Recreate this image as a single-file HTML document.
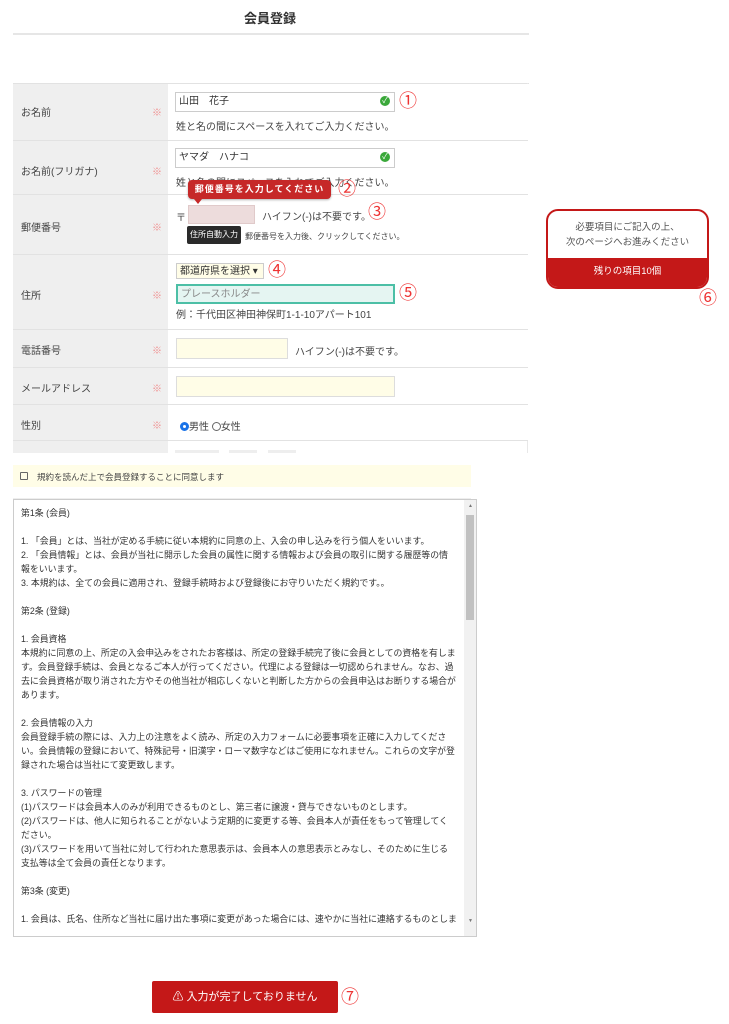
<!DOCTYPE html>
<html><head><meta charset="utf-8"><style>
*{box-sizing:border-box;margin:0;padding:0}
body{width:729px;height:1024px;background:#fff;font-family:"Liberation Sans","Noto Sans CJK JP",sans-serif;color:#333;position:relative;overflow:hidden}
.a{position:absolute}
.t{font-size:10px;color:#444;white-space:nowrap}
.lab{position:absolute;left:13px;width:155px;background:#efefef;border-bottom:1px solid #e2e2e2}
.val{position:absolute;left:168px;width:360px;border-bottom:1px solid #e2e2e2;background:#fff}
.lab span{position:absolute;left:8px;font-size:10px;color:#444}
.lab i{position:absolute;left:139px;font-style:normal;font-size:10px;color:#f08a8a}
.num{position:absolute;color:#e33;font-size:18px;line-height:18px}
.inp{position:absolute;border:1px solid #ccc;background:#fff}
.ok{position:absolute;width:10px;height:10px;border-radius:50%;background:#3aa83a;color:#fff;font-size:8px;line-height:10px;text-align:center}
</style></head><body>
<div class="a" style="left:0;top:8px;width:540px;text-align:center;font-size:13px;font-weight:bold;color:#333">会員登録</div>
<div class="a" style="left:13px;top:33px;width:516px;height:2px;background:#e6e6e6"></div>

<div class="a" style="left:13px;top:83px;width:516px;height:1px;background:#e2e2e2"></div>
<div class="a" style="left:527px;top:83px;width:1px;height:370px;background:#e8e8e8"></div>

<div class="lab" style="top:84px;height:57px"><span style="top:20px">お名前</span><i style="top:20px">※</i></div>
<div class="val" style="top:84px;height:57px"></div>
<div class="inp" style="left:175px;top:92px;width:220px;height:20px;font-size:10px;line-height:16px;padding:1px 3px;color:#333">山田　花子</div>
<div class="ok" style="left:380px;top:96px">✓</div>
<div class="num" style="left:399px;top:92px">①</div>
<div class="a t" style="left:176px;top:118px">姓と名の間にスペースを入れてご入力ください。</div>

<div class="lab" style="top:141px;height:54px"><span style="top:22px">お名前(フリガナ)</span><i style="top:22px">※</i></div>
<div class="val" style="top:141px;height:54px"></div>
<div class="inp" style="left:175px;top:148px;width:220px;height:20px;font-size:10px;line-height:16px;padding:1px 3px;color:#333">ヤマダ　ハナコ</div>
<div class="ok" style="left:380px;top:152px">✓</div>
<div class="a t" style="left:176px;top:174px">姓と名の間にスペースを入れてご入力ください。</div>

<div class="lab" style="top:195px;height:60px"><span style="top:24px">郵便番号</span><i style="top:24px">※</i></div>
<div class="val" style="top:195px;height:60px"></div>
<div class="a t" style="left:176px;top:209px">〒</div>
<div class="a" style="left:188px;top:205px;width:67px;height:19px;background:#eddcdc;border:1px solid #e0caca"></div>
<div class="a t" style="left:262px;top:208px">ハイフン(-)は不要です。</div>
<div class="num" style="left:368px;top:203px">③</div>
<div class="a" style="left:187px;top:226px;width:54px;height:18px;background:#2a2a2a;border-radius:2px;color:#fff;font-size:8px;line-height:18px;text-align:center">住所自動入力</div>
<div class="a" style="left:245px;top:231px;font-size:8px;color:#444;white-space:nowrap">郵便番号を入力後、クリックしてください。</div>
<div class="a" style="left:188px;top:180px;width:143px;height:19px;background:#c62828;border-radius:4px;color:#fff;font-size:9px;font-weight:bold;line-height:18px;text-align:center;letter-spacing:1px;box-shadow:0 1px 2px rgba(0,0,0,.3)">郵便番号を入力してください</div>
<div class="a" style="left:194px;top:199px;width:0;height:0;border-left:4px solid transparent;border-right:4px solid transparent;border-top:5px solid #c62828"></div>
<div class="num" style="left:338px;top:180px">②</div>

<div class="lab" style="top:255px;height:75px"><span style="top:32px">住所</span><i style="top:32px">※</i></div>
<div class="val" style="top:255px;height:75px"></div>
<div class="a" style="left:176px;top:263px;width:88px;height:16px;border:1px solid #ccc;background:#fffde7;font-size:10px;line-height:13px;padding:1px 3px;white-space:nowrap">都道府県を選択 ▾</div>
<div class="num" style="left:268px;top:261px">④</div>
<div class="a" style="left:176px;top:284px;width:219px;height:20px;border:2px solid #4cbfa6;background:#e5f5f2;font-size:10px;line-height:15px;color:#888;padding:1px 3px">プレースホルダー</div>
<div class="num" style="left:399px;top:284px">⑤</div>
<div class="a t" style="left:176px;top:306px">例：千代田区神田神保町1-1-10アパート101</div>

<div class="lab" style="top:330px;height:38px"><span style="top:12px">電話番号</span><i style="top:12px">※</i></div>
<div class="val" style="top:330px;height:38px"></div>
<div class="a" style="left:176px;top:338px;width:112px;height:21px;border:1px solid #ddd;background:#fffde7"></div>
<div class="a t" style="left:295px;top:343px">ハイフン(-)は不要です。</div>

<div class="lab" style="top:368px;height:37px"><span style="top:12px">メールアドレス</span><i style="top:12px">※</i></div>
<div class="val" style="top:368px;height:37px"></div>
<div class="a" style="left:176px;top:376px;width:219px;height:21px;border:1px solid #ddd;background:#fffde7"></div>

<div class="lab" style="top:405px;height:36px"><span style="top:12px">性別</span><i style="top:12px">※</i></div>
<div class="val" style="top:405px;height:36px"></div>
<div class="a t" style="left:180px;top:418px"><span style="display:inline-block;width:9px;height:9px;border-radius:50%;border:3px solid #1a73e8;vertical-align:-1px"></span>男性 <span style="display:inline-block;width:9px;height:9px;border-radius:50%;border:1px solid #666;vertical-align:-1px"></span>女性</div>

<div class="lab" style="top:441px;height:12px;border:0"></div>
<div class="a" style="left:175px;top:450px;width:44px;height:3px;background:#eee"></div>
<div class="a" style="left:229px;top:450px;width:28px;height:3px;background:#eee"></div>
<div class="a" style="left:268px;top:450px;width:28px;height:3px;background:#eee"></div>

<div class="a" style="left:546px;top:209px;width:163px;height:80px;border:2px solid #c41818;border-radius:12px;overflow:hidden;background:#fff">
<div style="height:47px;text-align:center;font-size:9.5px;color:#555;line-height:15px;padding-top:9px">必要項目にご記入の上、<br>次のページへお進みください</div>
<div style="height:31px;background:#c41818;color:#fff;text-align:center;font-size:9.5px;line-height:28px">残りの項目10個</div></div>
<div class="num" style="left:699px;top:289px">⑥</div>

<div class="a" style="left:13px;top:465px;width:458px;height:22px;background:#fffde7"></div>
<div class="a" style="left:20px;top:472px;width:8px;height:8px;border:1px solid #666;border-radius:1px"></div>
<div class="a" style="left:37px;top:471px;font-size:8.5px;color:#444;white-space:nowrap">規約を読んだ上で会員登録することに同意します</div>
<div class="a" style="left:13px;top:498px;width:458px;height:1px;background:#eee"></div>

<div class="a" style="left:13px;top:499px;width:464px;height:438px;border:1px solid #ccc;overflow:hidden">
<div style="position:absolute;left:7px;top:6px;width:445px;font-size:8.9px;line-height:14px;color:#333;white-space:nowrap">第1条 (会員)<br><br>1. 「会員」とは、当社が定める手続に従い本規約に同意の上、入会の申し込みを行う個人をいいます。<br>2. 「会員情報」とは、会員が当社に開示した会員の属性に関する情報および会員の取引に関する履歴等の情<br>報をいいます。<br>3. 本規約は、全ての会員に適用され、登録手続時および登録後にお守りいただく規約です。。<br><br>第2条 (登録)<br><br>1. 会員資格<br>本規約に同意の上、所定の入会申込みをされたお客様は、所定の登録手続完了後に会員としての資格を有しま<br>す。会員登録手続は、会員となるご本人が行ってください。代理による登録は一切認められません。なお、過<br>去に会員資格が取り消された方やその他当社が相応しくないと判断した方からの会員申込はお断りする場合が<br>あります。<br><br>2. 会員情報の入力<br>会員登録手続の際には、入力上の注意をよく読み、所定の入力フォームに必要事項を正確に入力してくださ<br>い。会員情報の登録において、特殊記号・旧漢字・ローマ数字などはご使用になれません。これらの文字が登<br>録された場合は当社にて変更致します。<br><br>3. パスワードの管理<br>(1)パスワードは会員本人のみが利用できるものとし、第三者に譲渡・貸与できないものとします。<br>(2)パスワードは、他人に知られることがないよう定期的に変更する等、会員本人が責任をもって管理してく<br>ださい。<br>(3)パスワードを用いて当社に対して行われた意思表示は、会員本人の意思表示とみなし、そのために生じる<br>支払等は全て会員の責任となります。<br><br>第3条 (変更)<br><br>1. 会員は、氏名、住所など当社に届け出た事項に変更があった場合には、速やかに当社に連絡するものとしま</div>
<div style="position:absolute;right:0;top:0;width:12px;height:100%;background:#f1f1f1"></div>
<div style="position:absolute;right:2px;top:15px;width:8px;height:105px;background:#c1c1c1"></div>
<div style="position:absolute;right:3px;top:3px;font-size:5px;color:#777">▲</div>
<div style="position:absolute;right:3px;bottom:12px;font-size:5px;color:#777">▼</div>
</div>

<div class="a" style="left:152px;top:981px;width:186px;height:32px;background:#c41818;border-radius:2px;color:#fff;font-size:11px;line-height:32px;text-align:center">⚠ 入力が完了しておりません</div>
<div class="num" style="left:341px;top:988px">⑦</div>
</body></html>
